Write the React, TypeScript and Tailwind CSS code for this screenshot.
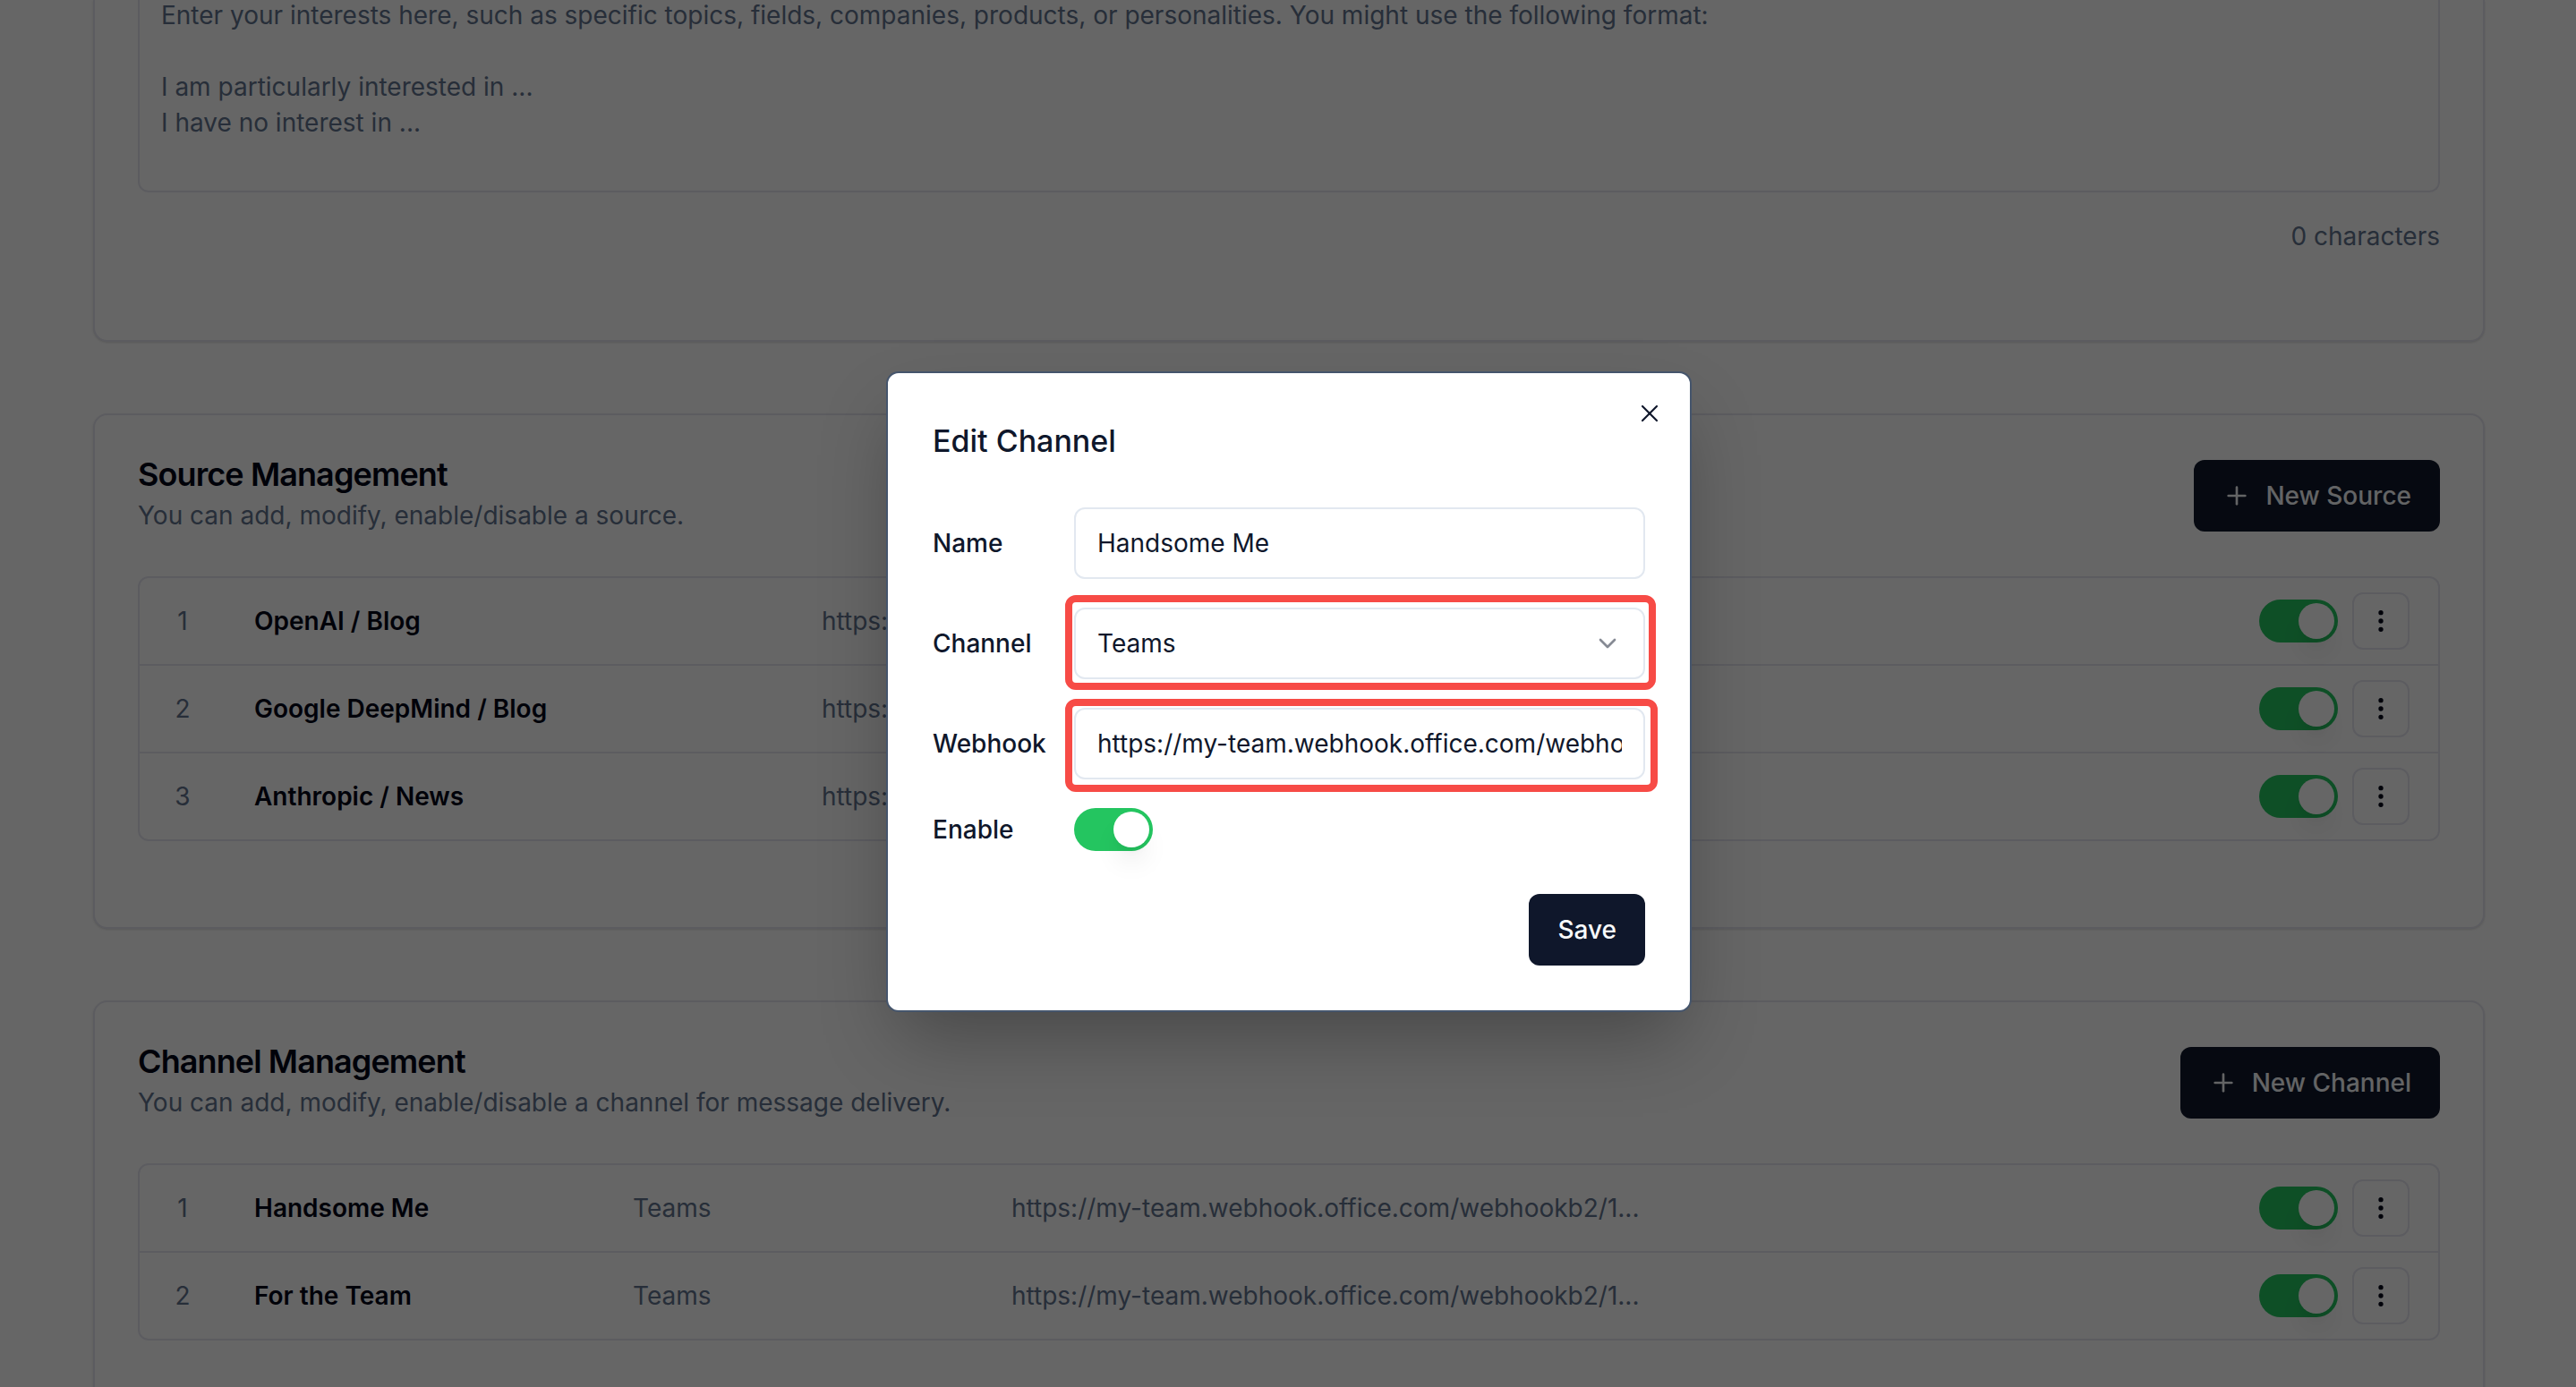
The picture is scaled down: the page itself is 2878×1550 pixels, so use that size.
import { ChevronDown, EllipsisVertical, Plus, X } from "lucide-react";
import type { ReactNode } from "react";

const sources = [
  { name: "OpenAI / Blog", url: "https://..." },
  { name: "Google DeepMind / Blog", url: "https://..." },
  { name: "Anthropic / News", url: "https://..." },
];

const channels = [
  { name: "Handsome Me", type: "Teams", url: "https://my-team.webhook.office.com/webhookb2/1..." },
  { name: "For the Team", type: "Teams", url: "https://my-team.webhook.office.com/webhookb2/1..." },
];

const placeholder =
  "Enter your interests here, such as specific topics, fields, companies, products, or personalities. You might use the following format:\n\nI am particularly interested in ...\nI have no interest in ...";

function Switch({ id, label }: { id?: string; label?: string }) {
  return (
    <input
      id={id}
      type="checkbox"
      role="switch"
      defaultChecked
      aria-label={label}
      className="flex h-12 w-22 shrink-0 appearance-none items-center rounded-full bg-slate-200 p-1 before:size-10 before:rounded-full before:bg-white before:shadow-[0_20px_30px_-6px_rgba(0,0,0,0.1),0_8px_12px_-8px_rgba(0,0,0,0.1)] before:content-[''] checked:justify-end checked:bg-[#24c560]"
    />
  );
}

function Row({ index, name, children }: { index: number; name: string; children: ReactNode }) {
  return (
    <tr className="h-[98px] last:h-24 [&>*]:border-[#e6e6f0] [&:not(:last-child)>*]:border-b-2">
      <td className="text-center text-slate-500">{index}</td>
      <th scope="row" className="px-8 text-left font-semibold">{name}</th>
      {children}
      <td className="pr-8">
        <div className="flex items-center justify-end gap-4">
          <Switch label={`Enable ${name}`} />
          <button
            type="button"
            aria-label={`Options for ${name}`}
            className="flex size-16 items-center justify-center rounded-xl border-2 border-[#e6e6f0] bg-white"
          >
            <EllipsisVertical className="size-8" />
          </button>
        </div>
      </td>
    </tr>
  );
}

function Section({
  title,
  description,
  action,
  children,
}: {
  title: string;
  description: string;
  action: string;
  children: ReactNode;
}) {
  return (
    <section className="rounded-2xl border-2 border-[#e6e6f0] bg-white px-12 pt-12 pb-24 shadow-sm">
      <div className="flex items-center justify-between">
        <div>
          <h2 className="text-4xl leading-9 font-semibold tracking-tight">{title}</h2>
          <p className="mt-2 text-[28px] leading-10 text-slate-500">{description}</p>
        </div>
        <button
          type="button"
          className="flex h-20 items-center rounded-xl bg-slate-900 px-8 text-[28px] leading-10 font-medium text-slate-50"
        >
          <Plus className="mr-4 size-8" />
          {action}
        </button>
      </div>
      <div className="mt-12 rounded-xl border-2 border-[#e6e6f0]">{children}</div>
    </section>
  );
}

export default function App() {
  return (
    <div className="relative h-screen overflow-hidden bg-white font-['Inter',sans-serif] text-[28px] leading-10 text-slate-950">
      <main className="flex flex-col gap-20 pr-[102px] pl-[104px]">
        <section className="rounded-b-2xl border-2 border-t-0 border-[#e6e6f0] bg-white px-12 pb-24 shadow-sm">
          <textarea
            aria-label="Interests"
            placeholder={placeholder}
            className="-mt-[3px] block h-[218px] w-full resize-none rounded-b-xl border-2 border-t-0 border-[#e6e6f0] bg-white px-6 placeholder:text-slate-500"
          />
          <p className="mt-[29px] text-right text-slate-500">0 characters</p>
        </section>

        <Section
          title="Source Management"
          description="You can add, modify, enable/disable a source."
          action="New Source"
        >
          <table className="w-full table-fixed border-separate border-spacing-0">
            <colgroup>
              <col className="w-[96px]" />
              <col className="w-[634px]" />
              <col />
              <col className="w-[300px]" />
            </colgroup>
            <tbody>
              {sources.map((source, i) => (
                <Row key={source.name} index={i + 1} name={source.name}>
                  <td className="truncate px-8 text-slate-500">{source.url}</td>
                </Row>
              ))}
            </tbody>
          </table>
        </Section>

        <Section
          title="Channel Management"
          description="You can add, modify, enable/disable a channel for message delivery."
          action="New Channel"
        >
          <table className="w-full table-fixed border-separate border-spacing-0">
            <colgroup>
              <col className="w-[96px]" />
              <col className="w-[423px]" />
              <col className="w-[423px]" />
              <col />
              <col className="w-[300px]" />
            </colgroup>
            <tbody>
              {channels.map((channel, i) => (
                <Row key={channel.name} index={i + 1} name={channel.name}>
                  <td className="px-8 text-slate-500">{channel.type}</td>
                  <td className="truncate px-8 text-slate-500">{channel.url}</td>
                </Row>
              ))}
            </tbody>
          </table>
        </Section>
      </main>

      <div className="absolute inset-0 flex items-center justify-center bg-black/60 pb-1 pl-0.5">
        <div
          role="dialog"
          aria-modal="true"
          aria-labelledby="dialog-title"
          className="relative w-[896px] rounded-xl border-2 border-white bg-white p-12 text-slate-900 shadow-[0_40px_80px_-12px_rgba(0,0,0,0.3)] ring-2 ring-slate-600"
        >
          <button type="button" aria-label="Close" className="absolute top-[27px] right-[27px] flex size-8 items-center justify-center">
            <X className="size-8" strokeWidth={1.6} />
          </button>
          <h2 id="dialog-title" className="text-[34px] leading-[52px] font-medium">Edit Channel</h2>
          <form className="mt-12 grid grid-cols-[158px_1fr] items-center gap-y-8">
            <label htmlFor="name" className="font-medium">Name</label>
            <input id="name" defaultValue="Handsome Me" className="block h-20 w-full rounded-xl border-2 border-slate-200 bg-white px-6" />

            <label htmlFor="channel" className="font-medium">Channel</label>
            <div className="relative">
              <select id="channel" className="block h-20 w-full appearance-none rounded-xl border-2 border-slate-200 bg-white px-6">
                <option>Teams</option>
              </select>
              <ChevronDown className="pointer-events-none absolute top-6 right-[26px] size-8 opacity-50" />
              <div className="pointer-events-none absolute -top-3.5 -right-3 -bottom-3 -left-2.5 rounded-xl border-8 border-[#f74b46]" />
            </div>

            <label htmlFor="webhook" className="font-medium">Webhook</label>
            <div className="relative">
              <input
                id="webhook"
                defaultValue="https://my-team.webhook.office.com/webhookb2/1"
                className="block h-20 w-full rounded-xl border-2 border-slate-200 bg-white px-6"
              />
              <div className="pointer-events-none absolute -top-2.5 -right-3.5 -bottom-3.5 -left-2.5 rounded-xl border-8 border-[#f74b46]" />
            </div>

            <label htmlFor="enable" className="font-medium">Enable</label>
            <Switch id="enable" />
          </form>
          <div className="mt-12 flex justify-end">
            <button type="button" className="h-20 rounded-xl bg-slate-900 px-8 font-medium text-slate-50">Save</button>
          </div>
        </div>
      </div>
    </div>
  );
}
